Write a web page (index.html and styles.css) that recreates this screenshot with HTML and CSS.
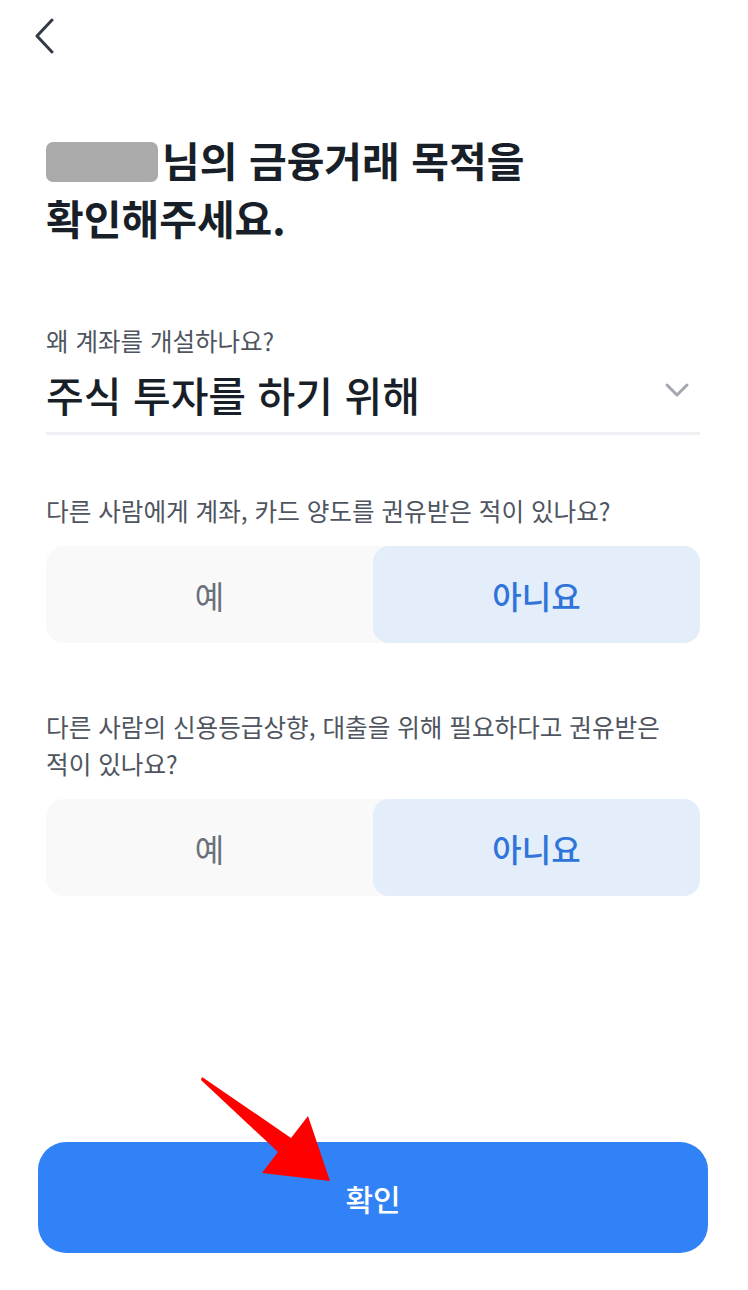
FILE: index.html
```html
<!DOCTYPE html>
<html lang="ko">
<head>
    <meta charset="UTF-8">
    <meta name="viewport" content="width=device-width, initial-scale=1.0">
    <title>금융거래 목적 확인</title>
    <link rel="stylesheet" href="styles.css">
</head>
<body>

<div class="page">
    <div class="top-bar">
        <button class="btn-back" aria-label="뒤로">
            <svg width="22" height="36" viewBox="0 0 22 36">
                <polyline points="18,2 3,18 18,34" fill="none" stroke="#333a45" stroke-width="3" stroke-linecap="round" stroke-linejoin="round"/>
            </svg>
        </button>
    </div>

    <h1 class="title"><span class="name-mask"></span>님의 금융거래 목적을<br>확인해주세요.</h1>

    <div class="field">
        <label class="field-label">왜 계좌를 개설하나요?</label>
        <div class="select">
            <span class="select-value">주식 투자를 하기 위해</span>
            <svg class="select-arrow" width="26" height="16" viewBox="0 0 26 16">
                <polyline points="3,3 13,13 23,3" fill="none" stroke="#a3a8b0" stroke-width="3" stroke-linecap="round" stroke-linejoin="round"/>
            </svg>
        </div>
    </div>

    <div class="question q1">
        <p class="question-text">다른 사람에게 계좌, 카드 양도를 권유받은 적이 있나요?</p>
        <div class="segment">
            <button class="segment-btn">예</button>
            <button class="segment-btn active">아니요</button>
        </div>
    </div>

    <div class="question q2">
        <p class="question-text">다른 사람의 신용등급상향, 대출을 위해 필요하다고 권유받은 적이 있나요?</p>
        <div class="segment">
            <button class="segment-btn">예</button>
            <button class="segment-btn active">아니요</button>
        </div>
    </div>

    <div class="bottom">
        <button class="btn-confirm">확인</button>
    </div>

    <!-- 안내용 화살표 -->
    <svg class="guide-arrow" width="748" height="1290" viewBox="0 0 748 1290">
        <polygon points="202,1077 205,1079 291,1138 308,1116 330,1181 262,1173 278,1152 201,1080" fill="#ff0000"/>
    </svg>
</div>

</body>
</html>
```

FILE: styles.css
```css
body {
    margin: 0;
    padding: 0;
    background-color: #fff;
    font-family: "Noto Sans CJK KR", "Noto Sans", sans-serif;
    color: #191f28;
}

.page {
    position: relative;
    width: 748px;
    height: 1290px;
    box-sizing: border-box;
    padding: 0 48px 0 46px;
    display: flex;
    flex-direction: column;
}

.top-bar {
    height: 76px;
    display: flex;
    align-items: center;
}

.btn-back {
    border: none;
    background: none;
    padding: 0;
    margin-left: -12px;
    margin-top: -4px;
    display: flex;
}

.title {
    margin: 54px 0 0;
    font-size: 41px;
    font-weight: 700;
    line-height: 58px;
}

.name-mask {
    display: inline-block;
    width: 112px;
    height: 40px;
    margin-right: 4px;
    background-color: #aaaaaa;
    border-radius: 7px;
    vertical-align: -5px;
}

.field {
    margin-top: 80px;
}

.field-label {
    display: block;
    font-size: 24.5px;
    color: #4e5560;
    line-height: 30px;
}

.select {
    display: flex;
    align-items: center;
    justify-content: space-between;
    height: 76px;
    border-bottom: 3px solid #eef0f3;
}

.select-value {
    font-size: 41px;
    font-weight: 500;
}

.select-arrow {
    margin-right: 10px;
    margin-top: -8px;
}

.question-text {
    margin: 0;
    font-size: 24.6px;
    line-height: 37px;
    color: #4e5560;
    word-break: keep-all;
}

.q1 {
    margin-top: 57px;
}

.q2 {
    margin-top: 65px;
}

.segment {
    margin-top: 17px;
    display: flex;
    height: 97px;
    background-color: #f9f9fa;
    border-radius: 18px;
}

.segment-btn {
    flex: 1;
    border: none;
    background: none;
    border-radius: 16px;
    font-family: inherit;
    font-size: 32px;
    color: #6b7079;
}

.segment-btn.active {
    background-color: #e4edfa;
    color: #2f74d8;
    font-weight: 500;
}

.bottom {
    margin-top: auto;
    margin-bottom: 37px;
    margin-left: -8px;
    margin-right: -8px;
}

.btn-confirm {
    width: 100%;
    height: 111px;
    border: none;
    border-radius: 28px;
    background-color: #3182f6;
    color: #fff;
    font-family: inherit;
    font-size: 30px;
    font-weight: 500;
}

.guide-arrow {
    position: absolute;
    left: 0;
    top: 0;
    pointer-events: none;
}
```
